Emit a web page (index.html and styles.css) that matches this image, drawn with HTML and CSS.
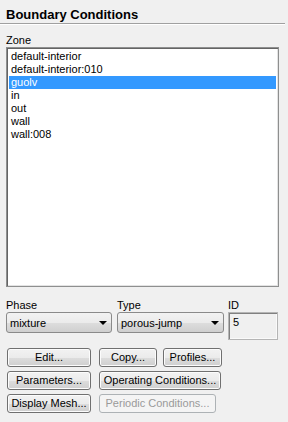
FILE: index.html
```html
<!DOCTYPE html>
<html>
<head>
<meta charset="utf-8">
<link rel="stylesheet" href="styles.css">
</head>
<body>
<div class="panel">
  <div class="title">Boundary Conditions</div>
  <div class="zone-label">Zone</div>
  <div class="listbox">
    <div class="item">default-interior</div>
    <div class="item">default-interior:010</div>
    <div class="item selected">guolv</div>
    <div class="item">in</div>
    <div class="item">out</div>
    <div class="item">wall</div>
    <div class="item">wall:008</div>
  </div>
  <div class="controls">
    <div class="col col-phase">
      <div class="lbl">Phase</div>
      <div class="select"><span>mixture</span><i class="arrow"></i></div>
    </div>
    <div class="col col-type">
      <div class="lbl">Type</div>
      <div class="select"><span>porous-jump</span><i class="arrow"></i></div>
    </div>
    <div class="col col-id">
      <div class="lbl">ID</div>
      <div class="idbox">5</div>
    </div>
  </div>
  <div class="buttons">
    <div class="brow">
      <div class="btn w-a">Edit...</div>
      <div class="btn w-copy">Copy...</div>
      <div class="btn w-prof">Profiles...</div>
    </div>
    <div class="brow">
      <div class="btn w-a">Parameters...</div>
      <div class="btn w-op">Operating Conditions...</div>
    </div>
    <div class="brow">
      <div class="btn w-a">Display Mesh...</div>
      <div class="btn w-per disabled">Periodic Conditions...</div>
    </div>
  </div>
</div>
</body>
</html>
```

FILE: styles.css
```css
html, body {
  margin: 0;
  padding: 0;
  background: #f0f0f0;
}
body {
  width: 288px;
  height: 422px;
  overflow: hidden;
  font-family: "Liberation Sans", Arial, sans-serif;
  font-size: 11px;
  color: #000;
}
.panel {
  display: flex;
  flex-direction: column;
}
.title {
  font-size: 13px;
  font-weight: bold;
  line-height: 15px;
  padding: 7px 0 1px 6px;
  width: 279px;
  border-bottom: 1px solid #a0a0a0;
  box-shadow: 0 1px 0 #ffffff;
}
.zone-label {
  margin: 10px 0 0 6px;
  line-height: 13px;
}
.listbox {
  margin-left: 6px;
  width: 273px;
  height: 240px;
  box-sizing: border-box;
  padding: 2px 2px 0 2px;
  background: #fff;
  border: 1px solid #8e8f8f;
  box-shadow: inset 1px 1px 0 #646464, inset -1px -1px 0 #e3e3e3;
}
.item {
  height: 13px;
  line-height: 13px;
  padding-left: 2px;
  white-space: nowrap;
}
.item.selected {
  background: #3399ff;
  color: #fff;
}
.controls {
  display: flex;
  margin: 12px 0 0 6px;
  gap: 5px;
}
.lbl {
  line-height: 13px;
}
.col-phase { width: 106px; }
.col-type { width: 107px; }
.col-id { width: 50px; margin-left: -1px; }
.select {
  height: 21px;
  box-sizing: border-box;
  border: 1px solid #8a8a8a;
  border-radius: 3px;
  background: linear-gradient(#f2f2f2, #ebebeb 50%, #dddddd 51%, #cfcfcf);
  display: flex;
  align-items: center;
  justify-content: space-between;
  padding: 0 4px 0 3px;
}
.arrow {
  width: 0;
  height: 0;
  border-left: 4px solid transparent;
  border-right: 4px solid transparent;
  border-top: 4px solid #000;
  margin-top: 1px;
}
.idbox {
  height: 28px;
  box-sizing: border-box;
  border: 1px solid #b5b5b5;
  box-shadow: inset 1px 1px 0 #808080, inset -1px -1px 0 #fafafa;
  background: #f0f0f0;
  padding: 3px 0 0 4px;
  line-height: 13px;
}
.buttons {
  display: flex;
  flex-direction: column;
  gap: 4px;
  margin: 8px 0 0 7px;
}
.brow {
  display: flex;
  gap: 8px;
}
.brow .w-prof { margin-left: -2px; }
.btn {
  height: 19px;
  box-sizing: border-box;
  border: 1px solid #707070;
  border-radius: 3px;
  background: linear-gradient(#f2f2f2, #ebebeb 50%, #dddddd 51%, #cfcfcf);
  box-shadow: inset 0 0 0 1px #fcfcfc;
  text-align: center;
  line-height: 17px;
  white-space: nowrap;
}
.btn.disabled {
  border-color: #adb2b5;
  background: #f4f4f4;
  box-shadow: none;
  color: #9a9a9a;
}
.w-a { width: 84px; }
.w-copy { width: 58px; }
.w-prof { width: 59px; }
.w-op { width: 122px; }
.w-per { width: 117px; }
```
